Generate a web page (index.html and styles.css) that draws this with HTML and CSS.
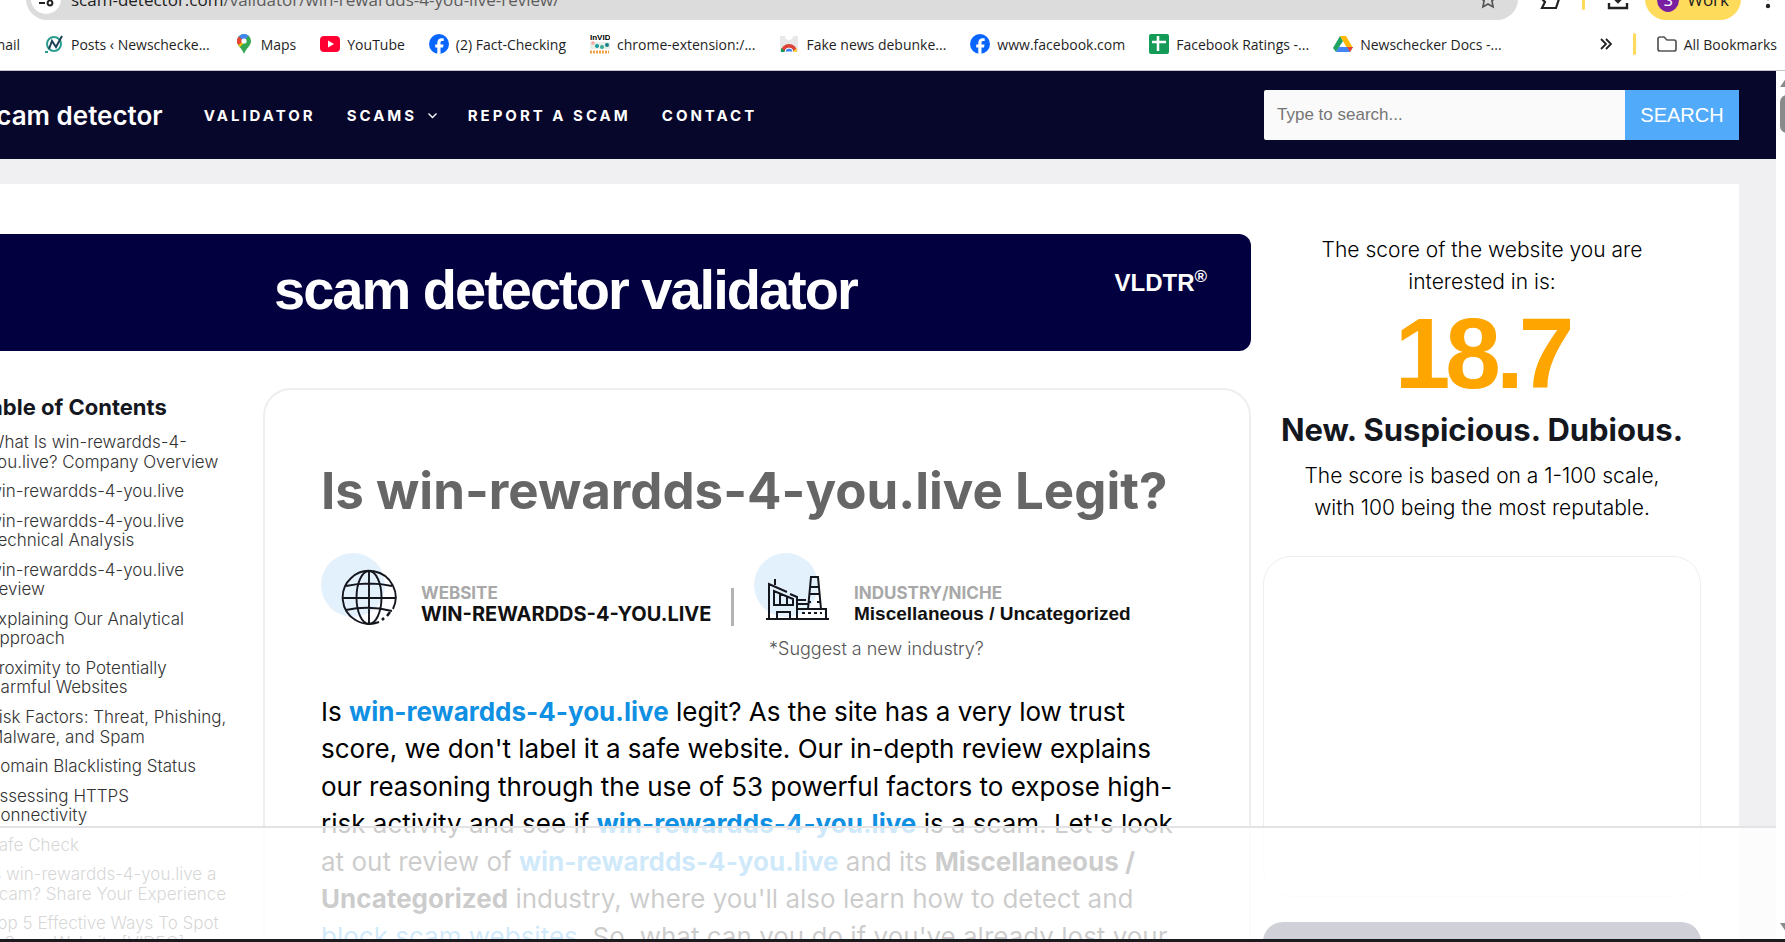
FILE: index.html
```html
<!DOCTYPE html>
<html lang="en">
<head>
    <meta charset="UTF-8">
    <meta name="viewport" content="width=device-width, initial-scale=1.0">
    <title>win-rewardds-4-you.live Review</title>
    <link rel="stylesheet" href="styles.css">
</head>
<body>

<!-- browser toolbar -->
<header class="browser">
    <div class="toolbar">
        <div class="address">
            <span class="site-info">
                <svg width="18" height="18" viewBox="0 0 18 18" fill="none" stroke="#222" stroke-width="2"><path d="M9 5h7M2 13h6"/><circle cx="4" cy="5" r="2"/><circle cx="13" cy="13" r="2.4"/></svg>
            </span>
            <span class="url">scam-detector.com<span class="path">/validator/win-rewardds-4-you-live-review/</span></span>
            <svg class="star" width="20" height="20" viewBox="0 0 20 20" fill="none" stroke="#555" stroke-width="1.7"><path d="M10 2l2.4 5.4 5.9.6-4.4 3.9 1.2 6-5.1-3-5.1 3 1.2-6L1.7 8l5.9-.6z"/></svg>
        </div>
        <svg class="tool" width="22" height="22" viewBox="0 0 22 22" fill="none" stroke="#222" stroke-width="2.2"><path d="M3 5h12v5l4 1-3 9H2l3-6-3-3z"/></svg>
        <span class="bar"></span>
        <svg class="tool" width="22" height="22" viewBox="0 0 22 22" fill="none" stroke="#222" stroke-width="2.4"><path d="M11 1v12M6 9l5 5 5-5M2 15v5h18v-5"/></svg>
        <button class="profile" type="button"><span class="avatar">S</span>Work</button>
        <svg class="dots" width="6" height="24" viewBox="0 0 6 24" fill="#222"><circle cx="3" cy="3" r="2.2"/><circle cx="3" cy="11" r="2.2"/><circle cx="3" cy="19" r="2.2"/></svg>
    </div>
    <nav class="bookmarks">
        <a href="#">Gmail</a>
        <a href="#"><svg width="20" height="18" viewBox="0 0 20 18" fill="none"><circle cx="10" cy="9" r="7" stroke="#2a9d8f" stroke-width="2"/><path d="M5 14L8 6l4 6 6-11" stroke="#1d4357" stroke-width="2"/><path d="M1 17h3" stroke="#2a9d8f" stroke-width="2"/></svg>Posts ‹ Newschecke...</a>
        <a href="#"><svg width="20" height="22" viewBox="0 0 18 22"><path d="M9 1a7 7 0 0 0-7 7c0 5 5 7 7 13 2-6 7-8 7-13a7 7 0 0 0-7-7z" fill="#34a853"/><path d="M9 1a7 7 0 0 0-5.4 2.5L9 8l4.5-5.4A7 7 0 0 0 9 1z" fill="#4285f4"/><path d="M3.6 3.5A7 7 0 0 0 2 8c0 1.6.5 2.9 1.3 4L9 8z" fill="#ea4335"/><path d="M3.3 12l1.7 2 6.500-7L9 8z" fill="#fbbc04"/><circle cx="9" cy="8" r="2.6" fill="#fff"/></svg>Maps</a>
        <a href="#"><svg width="20" height="16" viewBox="0 0 20 16"><rect width="20" height="16" rx="4" fill="#ff0033"/><path d="M8 4.5v7l6-3.5z" fill="#fff"/></svg>YouTube</a>
        <a href="#"><svg width="20" height="20" viewBox="0 0 20 20"><circle cx="10" cy="10" r="10" fill="#0866ff"/><path d="M8.3 20v-6.6H6.2v-3h2.1V9c0-3.3 1.5-4.8 4.7-4.8.6 0 1.3.1 1.7.2v2.7h-1.2c-1.5 0-2 .6-2 2v1.3h3l-.5 3h-2.5V20z" fill="#fff"/></svg>(2) Fact-Checking</a>
        <a href="#"><svg width="20" height="20" viewBox="0 0 20 20"><text class="invid" x="0" y="6">InVID</text><path d="M0 8h20v7H0z" fill="#e8efe8"/><circle cx="3" cy="9" r="1.8" fill="#f4a7a0"/><circle cx="7" cy="12" r="2" fill="#179a9a"/><circle cx="12" cy="13" r="2" fill="#35a89a"/><circle cx="17" cy="11" r="2" fill="#14808a"/><path d="M0 18h19" stroke="#f3a14a" stroke-width="3" stroke-dasharray="2 1"/></svg>chrome-extension:/...</a>
        <a href="#"><svg width="20" height="18" viewBox="0 0 18 18"><path d="M0 1h18v16H0z" fill="#e8e8e8"/><path d="M5 1a4 4 0 0 0 8 0z" fill="#fff"/><path d="M1 17a8 8 0 0 1 16 0z" fill="#db4437"/><path d="M1 17v-4l5 4z" fill="#0f9d58"/><path d="M12 17l5-4v4z" fill="#ffcd40"/><path d="M5 17a4 4 0 0 1 8 0z" fill="#4285f4" stroke="#fff"/></svg>Fake news debunke...</a>
        <a href="#"><svg width="20" height="20" viewBox="0 0 20 20"><circle cx="10" cy="10" r="10" fill="#0866ff"/><path d="M8.3 20v-6.6H6.2v-3h2.1V9c0-3.3 1.5-4.8 4.7-4.8.6 0 1.3.1 1.7.2v2.7h-1.2c-1.5 0-2 .6-2 2v1.3h3l-.5 3h-2.5V20z" fill="#fff"/></svg>www.facebook.com</a>
        <a href="#"><svg width="20" height="20" viewBox="0 0 20 20"><rect width="20" height="20" rx="2" fill="#149b58"/><path d="M9 2v15M3 8h14" stroke="#fff" stroke-width="2.5"/></svg>Facebook Ratings -...</a>
        <a href="#"><svg width="20" height="18" viewBox="0 0 20 18"><path d="M7 1L0 13l3 4 7-11z" fill="#1ea362"/><path d="M7 1h6l7 12h-6z" fill="#ffba00"/><path d="M3 17h14l3-5H6z" fill="#4285f4"/><path d="M14 12h6l-3 5z" fill="#ea4335"/></svg>Newschecker Docs -...</a>
        <svg class="more" width="12" height="12" viewBox="0 0 12 12" fill="none" stroke="#222" stroke-width="1.8"><path d="M1 1l5 5-5 5M6 1l5 5-5 5"/></svg>
        <span class="bar"></span>
        <a class="all" href="#"><svg width="20" height="16" viewBox="0 0 20 16" fill="none" stroke="#555" stroke-width="1.7"><path d="M1 13V3q0-2 2-2h4l3 3h7q2 0 2 2v7q0 2-2 2H3q-2 0-2-2z"/></svg>All Bookmarks</a>
    </nav>
</header>

<div class="viewport">
    <div class="page">
        <div class="site-header">
            <a class="logo" href="#">scam detector</a>
            <nav class="menu">
                <a href="#">Validator</a>
                <a href="#">Scams <svg width="9" height="6" viewBox="0 0 9 6" fill="none" stroke="#fff" stroke-width="1.3"><path d="M.5.5l4 4 4-4"/></svg></a>
                <a href="#">Report a scam</a>
                <a href="#">Contact</a>
            </nav>
            <form class="search">
                <input type="text" aria-label="Search" placeholder="Type to search...">
                <button type="submit">SEARCH</button>
            </form>
        </div>

        <div class="panel">
            <main class="main">
                <div class="banner">
                    <h2>scam detector validator</h2>
                    <span class="vldtr">VLDTR<sup>®</sup></span>
                </div>

                <div class="columns">
                    <!-- table of contents -->
                    <nav class="toc">
                        <h3>Table of Contents</h3>
                        <ul>
                            <li><a href="#">What Is win-rewardds-4-<br>you.live? Company Overview</a></li>
                            <li><a href="#">win-rewardds-4-you.live</a></li>
                            <li><a href="#">win-rewardds-4-you.live<br>Technical Analysis</a></li>
                            <li><a href="#">win-rewardds-4-you.live<br>Review</a></li>
                            <li><a href="#">Explaining Our Analytical<br>Approach</a></li>
                            <li><a href="#">Proximity to Potentially<br>Harmful Websites</a></li>
                            <li><a href="#">Risk Factors: Threat, Phishing,<br>Malware, and Spam</a></li>
                            <li><a href="#">Domain Blacklisting Status</a></li>
                            <li><a href="#">Assessing HTTPS<br>Connectivity</a></li>
                            <li><a href="#">Safe Check</a></li>
                            <li><a href="#">Is win-rewardds-4-you.live a<br>Scam? Share Your Experience</a></li>
                            <li><a href="#">Top 5 Effective Ways To Spot<br>A Scam Website [VIDEO]</a></li>
                        </ul>
                    </nav>

                    <article class="review">
                        <h1>Is win-rewardds-4-you.live Legit?</h1>
                        <div class="facts">
                            <div class="fact">
                                <svg width="76" height="76" viewBox="0 0 76 76" fill="none" stroke="#14161d" stroke-width="1.9"><circle cx="32" cy="32" r="32" fill="#e3f1fd" stroke="none"/><path d="M58 69a26.5 26.5 0 1 1 14-13M48 18v53M21.5 45h53M25 33q23-5 46 0M25 57q23-5 46 1"/><ellipse cx="48" cy="44.5" rx="12.5" ry="26.5"/><path d="M61 67l2-2M66 63l3-4" stroke-width="2.5"/></svg>
                                <div>
                                    <span class="label">WEBSITE</span>
                                    <strong class="site">WIN-REWARDDS-4-YOU.LIVE</strong>
                                </div>
                            </div>
                            <div class="fact">
                                <svg width="76" height="76" viewBox="0 0 76 76" fill="none" stroke="#14161d" stroke-width="2"><circle cx="32" cy="32" r="32" fill="#e3f1fd" stroke="none"/><path d="M12 66h63M15 66V31l18 8M36 41l7 3v22M21 32v-6M20 52V38l19 8v6zM26 41v11M33 44v8M23 65v-6h13v6M44 56h28v9M54 56l3-32h7l3 32M56 34h9M55 41h11M54 49h3M63 49h4M43 47h9M43 51h11"/><path d="M48 60h20" stroke-dasharray="3 3"/></svg>
                                <div>
                                    <span class="label">INDUSTRY/NICHE</span>
                                    <strong class="niche">Miscellaneous / Uncategorized</strong>
                                </div>
                            </div>
                            <a class="suggest" href="#">*Suggest a new industry?</a>
                        </div>
                        <p>Is <a href="#"><b>win-rewardds-4-you.live</b></a> legit? As the site has a very low trust<br>
                        score, we don't label it a safe website. Our in-depth review explains<br>
                        our reasoning through the use of 53 powerful factors to expose high-<br>
                        risk activity and see if <a href="#"><b>win-rewardds-4-you.live</b></a> is a scam. Let's look<br>
                        at out review of <a href="#"><b>win-rewardds-4-you.live</b></a> and its <b>Miscellaneous /<br>
                        Uncategorized</b> industry, where you'll also learn how to detect and<br>
                        <a href="#">block scam websites</a>. So, what can you do if you've already lost your</p>
                    </article>
                </div>
            </main>

            <aside class="score">
                <p>The score of the website you are<br>interested in is:</p>
                <div class="number">18.7</div>
                <h3>New. Suspicious. Dubious.</h3>
                <p>The score is based on a 1-100 scale,<br>with 100 being the most reputable.</p>
                <div class="ad"></div>
                <div class="promo"></div>
            </aside>
        </div>

        <div class="bottom-ad"></div>
    </div>

    <div class="scrollbar">
        <svg width="14" height="10" viewBox="0 0 14 10" fill="#8a8a8a"><path d="M7 0l7 10H0z"/></svg>
        <span class="thumb"></span>
        <svg width="14" height="10" viewBox="0 0 14 10" fill="#8a8a8a"><path d="M7 10l7-10H0z"/></svg>
    </div>
</div>
<div class="taskbar"></div>

</body>
</html>
```
FILE: styles.css
```css
* {
    box-sizing: border-box;
}
body {
    font-family: Inter, sans-serif;
    margin: 0;
    height: 100vh;
    display: flex;
    flex-direction: column;
    overflow: hidden;
    background-color: #fff;
    color: #000;
}
a {
    color: inherit;
    text-decoration: none;
}
h1, h2, h3, p, ul {
    margin: 0;
    padding: 0;
}

/* browser */
.browser {
    font-family: "Open Sans", sans-serif;
    border-bottom: 1px solid #c4c4c8;
    flex: none;
}
.toolbar {
    display: flex;
    align-items: center;
    height: 42px;
    margin-top: -22px;
    padding: 0 14px 0 26px;
}
.address {
    flex: 1;
    display: flex;
    align-items: center;
    height: 42px;
    border-radius: 21px;
    background-color: #dcdcdc;
    padding: 0 20px 0 5px;
}
.site-info {
    display: flex;
    align-items: center;
    justify-content: center;
    width: 30px;
    height: 30px;
    border-radius: 50%;
    background-color: #fff;
}
.url {
    flex: 1;
    margin-left: 10px;
    font-size: 17px;
    color: #222;
}
.url .path {
    color: #5c5c5c;
}
.tool {
    margin-left: 22px;
}
.bar {
    width: 3px;
    height: 22px;
    border-radius: 2px;
    background-color: #ffdb5c;
    margin-left: 20px;
}
.profile {
    display: flex;
    align-items: center;
    gap: 8px;
    width: 96px;
    height: 42px;
    margin: 0 24px 0 16px;
    padding: 0 12px;
    border: none;
    border-radius: 21px;
    background-color: #ffdb5c;
    font: 17px "Open Sans", sans-serif;
    color: #222;
}
.avatar {
    width: 25px;
    height: 25px;
    line-height: 25px;
    border-radius: 50%;
    background-color: #7b1fa2;
    color: #fff;
    text-align: center;
}
.bookmarks {
    display: flex;
    align-items: center;
    height: 50px;
    gap: 24px;
    margin-left: -18px;
    padding: 0 8px 2px 0;
    font-size: 14px;
    color: #1f1f1f;
    white-space: nowrap;
}
.bookmarks a {
    display: flex;
    align-items: center;
    gap: 7px;
}
.bookmarks .more {
    margin-left: auto;
}
.bookmarks .bar {
    margin: 0 -3px;
}
.invid {
    font-family: "Liberation Sans", Arial, sans-serif;
    font-size: 8px;
    font-weight: 700;
}

/* page */
.viewport {
    flex: 1;
    min-height: 0;
    display: flex;
}
.page {
    position: relative;
    flex: 1;
    min-width: 0;
    overflow: hidden;
    background-color: #f0f0f2;
}
.scrollbar {
    width: 9px;
    overflow: hidden;
    display: flex;
    flex-direction: column;
    align-items: flex-start;
    gap: 8px;
    padding: 6px 0 6px 4px;
}
.scrollbar .thumb {
    width: 14px;
    height: 38px;
    border-radius: 7px;
    background-color: #8a8a8a;
    margin-bottom: auto;
}
.taskbar {
    flex: none;
    height: 3px;
    background-color: #1b1b1f;
}

.site-header {
    display: flex;
    align-items: center;
    height: 88px;
    padding-right: 37px;
    background-color: #07062b;
    color: #fff;
}
.logo {
    margin-left: -18px;
    font-size: 26px;
    font-weight: 600;
}
.menu {
    display: flex;
    gap: 31px;
    margin-left: 41px;
    font-size: 15px;
    font-weight: 700;
    letter-spacing: 3px;
    text-transform: uppercase;
}
.menu svg {
    margin: 0 0 2px 4px;
}
.search {
    display: flex;
    width: 475px;
    height: 50px;
    margin-left: auto;
}
.search input {
    flex: 1;
    min-width: 0;
    padding: 0 13px;
    border: none;
    border-radius: 2px 0 0 2px;
    background-color: #fafafa;
    font: 17px "Liberation Sans", Arial, sans-serif;
}
.search input::placeholder {
    color: #757575;
}
.search button {
    width: 114px;
    border: none;
    background-color: #52abfa;
    color: #fff;
    font: 20px "Liberation Sans", Arial, sans-serif;
}

.panel {
    display: flex;
    gap: 12px;
    margin: 25px 37px 0 0;
    padding: 50px 38px 0 0;
    background-color: #fff;
}
.main {
    flex: 1;
}
.banner {
    display: flex;
    justify-content: space-between;
    height: 117px;
    padding: 25px 44px 0 274px;
    border-radius: 0 12px 12px 0;
    background-color: #030040;
    color: #fff;
    font-family: "Liberation Sans", Arial, sans-serif;
}
.banner h2 {
    font-size: 56px;
    line-height: 62px;
    letter-spacing: -2px;
}
.vldtr {
    margin-top: 9px;
    font-size: 24px;
    line-height: 30px;
    font-weight: 700;
}
.vldtr sup {
    font-size: 17px;
    line-height: 1;
}
.columns {
    display: flex;
    margin-top: 37px;
}

.toc {
    width: 263px;
    flex: none;
    margin-left: -12px;
    margin-right: 12px;
    color: #333;
    white-space: nowrap;
}
.toc h3 {
    margin: 5px 0 12px -11px;
    font-size: 22px;
    line-height: 28px;
    color: #15171f;
}
.toc ul {
    list-style: none;
    font-size: 17px;
    font-weight: 300;
    line-height: 1.15;
}
.toc li {
    margin-bottom: 10px;
}

.review {
    flex: 1;
    padding: 73px 56px 60px;
    border: 2px solid #eee;
    border-radius: 28px;
    white-space: nowrap;
}
.review h1 {
    font-size: 51px;
    line-height: 56px;
    color: #666;
}
.review p {
    margin-top: 34px;
    font-size: 26px;
    line-height: 1.44;
}
.review p a {
    color: #0f90e3;
}
.facts {
    display: grid;
    grid-template-columns: 433px 1fr;
    margin-top: 34px;
}
.fact {
    display: flex;
    gap: 24px;
}
.fact > div {
    height: 38px;
    margin-top: 35px;
}
.fact:first-child > div {
    flex: 1;
    margin-right: 20px;
    border-right: 3px solid #b3b3b3;
}
.label {
    display: block;
    font-size: 17px;
    line-height: 11px;
    font-weight: 700;
    color: #a8a8a8;
}
.site, .niche {
    font-size: 20px;
    line-height: 30px;
    color: #111;
}
.niche {
    font-family: "Liberation Sans", Arial, sans-serif;
    font-size: 19px;
}
.suggest {
    grid-column: 2;
    padding-left: 15px;
    margin-top: 10px;
    font-size: 18px;
    line-height: 20px;
    color: #555;
    font-weight: 300;
}

.score {
    width: 438px;
    flex: none;
    text-align: center;
    white-space: nowrap;
}
.score p {
    font-size: 21px;
    font-weight: 300;
    line-height: 32px;
}
.score .number {
    font-family: "Liberation Sans", Arial, sans-serif;
    font-size: 100px;
    line-height: 110px;
    margin-bottom: 4px;
    font-weight: 700;
    letter-spacing: -5px;
    color: #ffa500;
}
.score h3 {
    font-size: 31px;
    line-height: 36px;
    margin-bottom: 12px;
    color: #15171f;
}
.score .ad {
    height: 341px;
    margin-top: 32px;
    border: 1px solid #eee;
    border-radius: 28px;
}
.score .promo {
    height: 160px;
    margin-top: 25px;
    border-radius: 20px;
    background-color: #14143c;
}

/* half transparent strip over the page bottom */
.bottom-ad {
    position: absolute;
    left: 0;
    right: 0;
    bottom: 0;
    height: 113px;
    border-top: 2px solid #e3e3e6;
    background-color: rgba(255, 255, 255, 0.8);
    background-clip: padding-box;
}
```
